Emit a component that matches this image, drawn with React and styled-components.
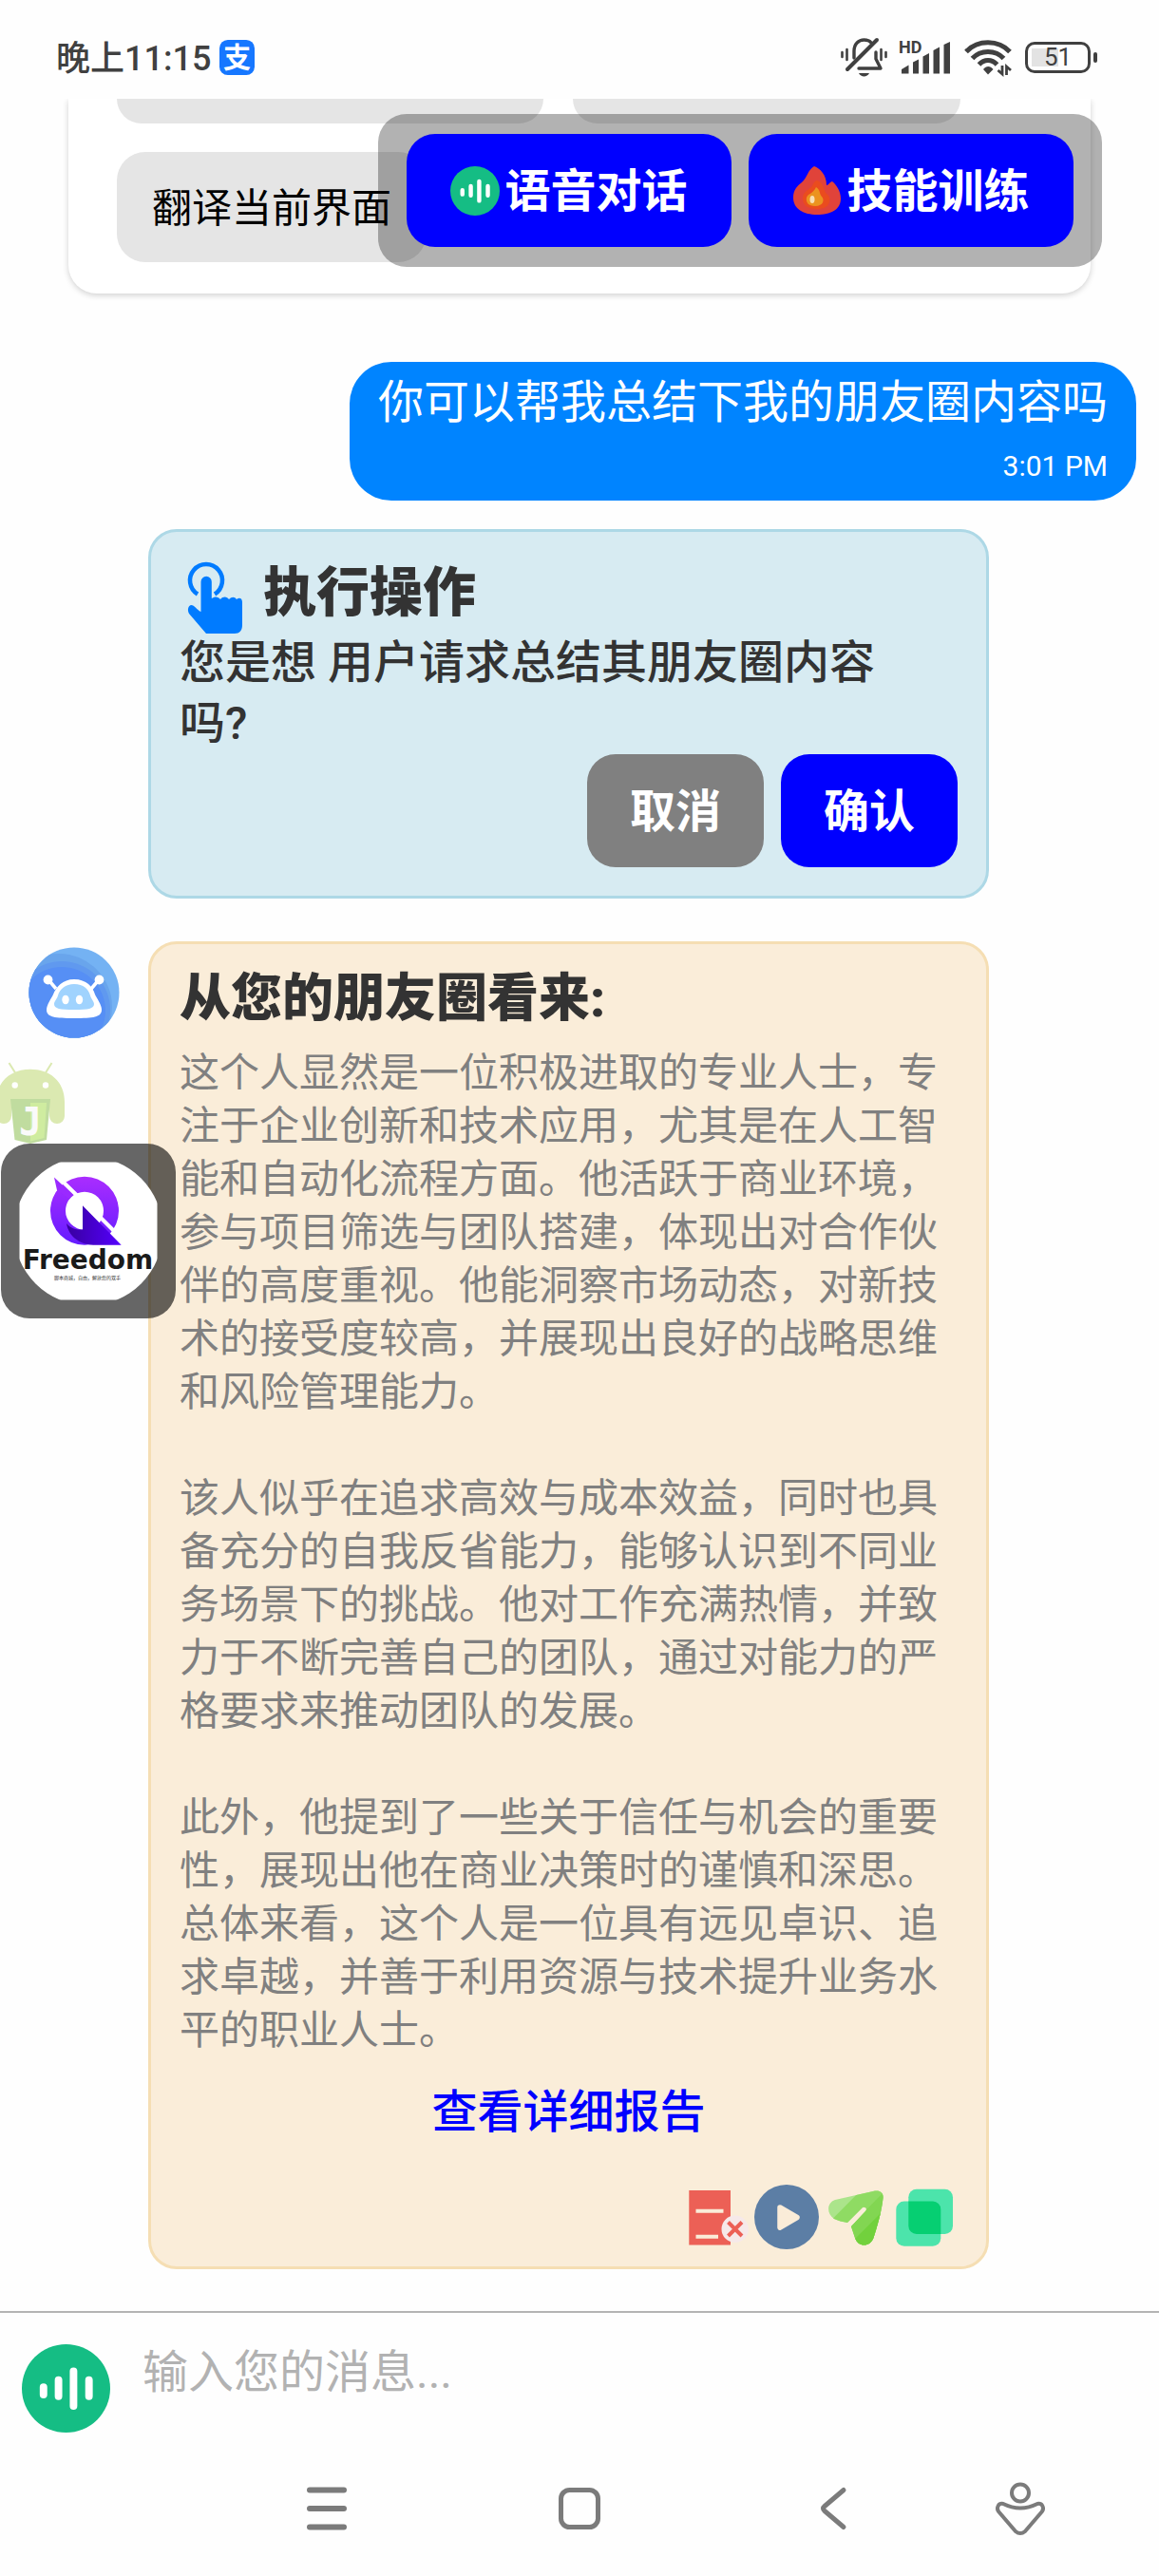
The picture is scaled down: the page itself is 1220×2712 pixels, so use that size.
import React from 'react';
import styled, { createGlobalStyle } from 'styled-components';

const GlobalStyle = createGlobalStyle`
    * {
        box-sizing: border-box;
    }
    body {
        margin: 0;
        background-color: #fefefe;
        font-family: Roboto, 'Noto Sans CJK SC', sans-serif;
    }
    h2, p {
        margin: 0;
    }
    button {
        margin: 0;
        padding: 0;
        border: none;
        background: none;
        font-family: inherit;
        cursor: pointer;
    }
    svg {
        display: block;
        flex: none;
        overflow: visible;
    }
`

const Page = styled.div`
    position: relative;
    display: flex;
    flex-direction: column;
    min-height: 100vh;
    overflow: hidden;
`

/* status bar */
const StatusBar = styled.header`
    display: flex;
    align-items: center;
    justify-content: space-between;
    height: 104px;
    padding: 16px 65px 0 59px;
    color: #404040;
`
const Clock = styled.div`
    display: flex;
    align-items: center;
    gap: 9px;
`
const ClockText = styled.span`
    padding-bottom: 4px;
    font-size: 36px;
    font-weight: 500;
`
const StatusIcons = styled.div`
    display: flex;
    align-items: center;
    gap: 13px;
`
const Battery = styled.div`
    display: flex;
    align-items: center;
    gap: 3px;
    &::after {
        content: '';
        width: 4px;
        height: 11px;
        border-radius: 2px;
        background-color: #404040;
    }
`
const BatteryBody = styled.div`
    width: 69px;
    height: 33px;
    border: 3px solid #404040;
    border-radius: 10px;
    background: linear-gradient(to right, #e3e3e3 50%, transparent 50%) 4px 4px / 55px 19px no-repeat;
    font-size: 26px;
    line-height: 27px;
    text-align: center;
`

/* chat */
const Chat = styled.main`
    flex: 1;
    display: flex;
    flex-direction: column;
`
const Panel = styled.section`
    display: flex;
    flex-direction: column;
    gap: 30px;
    margin: 0 72px;
    padding: 0 51px 33px;
    border-radius: 0 0 30px 30px;
    background-color: #fff;
    box-shadow: 0 2px 6px rgba(0, 0, 0, 0.18);
    clip-path: inset(0 -10px -10px -10px);
`
const ChipRow = styled.div`
    display: flex;
    gap: 31px;
`
const ChipEnd = styled.div`
    flex: 0 1 ${props => props.$basis};
    height: 26px;
    border-radius: 0 0 28px 28px;
    background-color: #e5e5e5;
`
const Chip = styled.button`
    height: 116px;
    padding: 0 37px 6px;
    border-radius: 30px;
    background-color: #e5e5e5;
    color: #000;
    font-size: 42px;
`
const UserBubble = styled.div`
    align-self: flex-end;
    margin: 72px 24px 0;
    padding: 11px 30px 16px;
    border-radius: 44px;
    background-color: #0084ff;
    color: #fff;
    font-size: 48px;
    line-height: 64px;
`
const Time = styled.div`
    margin-top: 15px;
    font-size: 30px;
    line-height: 40px;
    text-align: right;
`
const BotRow = styled.div`
    display: flex;
    margin-top: ${props => props.$top};
    padding-right: 179px;
`
const AvatarCell = styled.div`
    flex: none;
    width: 156px;
    padding: 6px 0 0 30px;
`
const Card = styled.article`
    flex: 1;
    min-width: 0;
    padding: ${props => props.$padding};
    border: 3px solid ${props => props.$line};
    border-radius: 30px;
    background-color: ${props => props.$fill};
    color: #333;
`
const CardHead = styled.div`
    display: flex;
    gap: 18px;
    height: 76px;
    padding-left: 6px;
`
const CardTitle = styled.h2`
    font-size: ${props => props.$size};
    font-weight: 900;
    line-height: 68px;
`
const Question = styled.p`
    padding-right: 30px;
    font-size: 48px;
    font-weight: 500;
    line-height: 64px;
`
const Report = styled.p`
    margin-top: 16px;
    color: #808080;
    font-size: 42px;
    line-height: 56px;
    white-space: pre-line;
`
const ReportLink = styled.a`
    display: block;
    margin-top: 26px;
    color: #0000ff;
    font-size: 48px;
    font-weight: 500;
    line-height: 64px;
    text-align: center;
    text-decoration: none;
`
const ButtonRow = styled.div`
    display: flex;
    justify-content: flex-end;
    gap: 18px;
`
const ActionRow = styled.div`
    display: flex;
    justify-content: flex-end;
    gap: 5px;
    margin-top: 44px;
`
const Button = styled.button`
    display: flex;
    align-items: center;
    justify-content: center;
    gap: 5px;
    min-width: ${props => props.$wide ? '342px' : '186px'};
    height: 119px;
    border-radius: 30px;
    background-color: ${props => props.$gray ? '#808080' : '#0000ff'};
    color: #fff;
    font-size: 48px;
    font-weight: 700;
    white-space: nowrap;
`
const ButtonLabel = styled.span`
    padding-bottom: 8px;
`

/* floating parts */
const Toolbox = styled.div`
    position: absolute;
    top: 120px;
    right: 60px;
    display: flex;
    gap: 18px;
    padding: 21px 30px;
    border-radius: 30px;
    background-color: rgba(0, 0, 0, 0.3);
`
const RobotFloat = styled.div`
    position: absolute;
    top: 1110px;
    left: 0;
`
const LogoFloat = styled.button`
    position: absolute;
    top: 1204px;
    left: 1px;
    border-radius: 30px;
    background-color: rgba(0, 0, 0, 0.6);
`

/* input + system keys */
const Composer = styled.form`
    display: flex;
    align-items: flex-start;
    gap: 34px;
    height: 137px;
    margin-top: 44px;
    padding: 33px 23px 0;
    border-top: 2px solid #b4b4b4;
`
const MessageInput = styled.input`
    flex: 1;
    min-width: 0;
    height: 58px;
    margin: 0;
    padding: 0;
    border: none;
    outline: none;
    background: none;
    font-family: inherit;
    font-size: 48px;
    &::placeholder {
        color: #b2b2b2;
        opacity: 1;
    }
`
const NavBar = styled.nav`
    display: grid;
    grid-template-columns: 211fr 266fr 266fr 268fr 126fr 83fr;
    height: 142px;
    & > button {
        display: flex;
        align-items: center;
        justify-content: center;
    }
    & > button:first-child {
        grid-column: 2;
    }
`

const reportText = `这个人显然是一位积极进取的专业人士，专注于企业创新和技术应用，尤其是在人工智能和自动化流程方面。他活跃于商业环境，参与项目筛选与团队搭建，体现出对合作伙伴的高度重视。他能洞察市场动态，对新技术的接受度较高，并展现出良好的战略思维和风险管理能力。

该人似乎在追求高效与成本效益，同时也具备充分的自我反省能力，能够认识到不同业务场景下的挑战。他对工作充满热情，并致力于不断完善自己的团队，通过对能力的严格要求来推动团队的发展。

此外，他提到了一些关于信任与机会的重要性，展现出他在商业决策时的谨慎和深思。总体来看，这个人是一位具有远见卓识、追求卓越，并善于利用资源与技术提升业务水平的职业人士。`

const PayIcon = () => (
    <svg width="37" height="37" viewBox="0 0 38 38">
        <rect width="38" height="38" rx="9" fill="#1677ff" />
        <text x="19" y="30" fontSize="30" fontWeight="700" textAnchor="middle" fill="#fff">支</text>
    </svg>
)

const MuteIcon = () => (
    <svg width="49" height="43" viewBox="14 9 49 43" fill="none" stroke="#404040" strokeWidth="3.4" strokeLinecap="round">
        <path d="M28 31V24C28 16 33 12 38.500 12C42 12 44.500 13 46 15" />
        <path d="M51 25V32L56 42H33" strokeLinejoin="round" />
        <path d="M52 12L21 43" strokeWidth="4" />
        <path d="M33 47H44C42 51.500 35 51.500 33 47Z" fill="#404040" stroke="none" />
        <path d="M15.500 25V30M20.500 22V33M56.500 22V33M61.500 25V30" strokeWidth="2.600" />
    </svg>
)

const SignalIcon = () => (
    <svg width="54" height="38" viewBox="76 10 54 38" fill="#404040">
        <text x="75" y="25" fontSize="18" fontWeight="700">HD</text>
        <path d="M78 42L85.500 37.500V46.500H78Z" />
        <path d="M90 34.500L96 31.500V46.500H90Z" />
        <path d="M100.500 28.500L107 25V46.500H100.500Z" />
        <path d="M111.500 22L118 18.500V46.500H111.500Z" />
        <path d="M122.500 16L129 13V46.500H122.500Z" />
    </svg>
)

const WifiIcon = () => (
    <svg width="52" height="40" viewBox="142 10 52 40" fill="none" stroke="#404040" strokeWidth="5">
        <path d="M145 24.500C157 11.500 179 11.500 191 24.500" />
        <path d="M151.500 31.500C160 22 176 22 184.500 31.500" />
        <path d="M158.500 38C164 32 172 32 177.500 38" />
        <path d="M163 43C166 39 170.500 39 173.500 43L168 48.500Z" fill="#404040" stroke="none" />
        <path d="M183 39V48L178.500 44M187.500 49V40L192 44" strokeWidth="2.800" />
    </svg>
)

const VoiceIcon = ({ size }) => (
    <svg width={size} height={size} viewBox="0 0 100 100">
        <circle cx="50" cy="50" r="50" fill="#15bd84" />
        <path d="M24.500 48.500V57M41.500 40.500V59M58.500 30.500V70M76 40.500V59" fill="none" stroke="#fff" strokeWidth="8.500" strokeLinecap="round" />
    </svg>
)

const FireIcon = () => (
    <svg width="52" height="53" viewBox="0 0 52 53">
        <path d="M23 1C29 3 36 10 36 21C38 21 40 17 42 17C46 20 51 27 51 35C51 47 40 52 26 52C12 52 1 46 1 34C1 26 5 22 10 18C16 13 16 5 23 1Z" fill="#e0433a" />
        <path d="M26 16C34 19 33 27 36 30C39 32 40 35 39 39C37 45 32 46 25 46C17 46 11 42 11 35C11 28 17 26 20 23C22 21 22 17 26 16Z" fill="#ea4c1e" />
        <path d="M25 23C30 26 28 30 31 33C34 36 33 43 24 43C17 43 14 39 15 34C16 30 22 30 25 23Z" fill="#eb931f" />
        <ellipse cx="21" cy="36" rx="2.500" ry="4" fill="#f8dfb4" />
    </svg>
)

const TapIcon = () => (
    <svg width="64" height="78" viewBox="0 0 64 78" fill="#007bff">
        <path d="M13 35.500A17 17 0 1 1 31 35.500" fill="none" stroke="#007bff" strokeWidth="4.500" />
        <path d="M16.500 22.500A5.600 5.600 0 0 1 27.800 22.500V40C31 37.500 35 38 37 41C40 37.500 44 38 46 41C49 38 52 38 54 41C57 38.500 60 40 60 44V68C60 74 57 77 52 77H22L4 56C2 52 3 48 6 47C10 47 12 52 16.500 54Z" />
    </svg>
)

const BotAvatar = () => (
    <svg width="96" height="96" viewBox="30 27 96 96">
        <clipPath id="avatarClip"><circle cx="78" cy="75" r="47.500" /></clipPath>
        <g clipPath="url(#avatarClip)">
            <rect x="30" y="27" width="96" height="96" fill="#74b2f3" />
            <circle cx="62" cy="90" r="56" fill="#69a5ec" />
            <circle cx="65" cy="93" r="51" fill="#6099ef" />
            <circle cx="65" cy="94" r="46" fill="#568ff5" />
        </g>
        <path d="M50.500 61L59 71M104.500 61L96 71" stroke="#fff" strokeWidth="3.500" />
        <circle cx="50.500" cy="61.500" r="4.900" fill="#fff" />
        <circle cx="104.500" cy="61.500" r="4.900" fill="#fff" />
        <path d="M78 61C91 61 98 69 100 77C102 81 107 88 107 93C107 101 98 102 78 102C58 102 49 101 49 93C49 88 54 81 56 77C59 69 66 61 78 61Z" fill="#fff" />
        <path d="M78 66C88 66 93 71 95 78C96 82 99 84 99 87C99 92 93 93 78 93C63 93 57 92 57 87C57 84 60 82 61 78C63 71 69 66 78 66Z" fill="#a0d3fe" />
        <ellipse cx="69" cy="82.500" rx="3.700" ry="4.800" fill="#fff" />
        <ellipse cx="83.500" cy="82.500" rx="3.700" ry="4.800" fill="#fff" />
    </svg>
)

const RobotIcon = () => (
    <svg width="70" height="94" viewBox="0 0 70 94">
        <path d="M9.500 9L17 21M54.500 9L47 21" stroke="#dbe9b1" strokeWidth="2" />
        <path d="M-4 50C-4 28 12 15.700 32 15.700S68 28 68 50V65A8 8 0 0 1 52 65V47H12V65A8 8 0 0 1 -4 65Z" fill="#dbe9b1" />
        <circle cx="15.700" cy="32.500" r="3.200" fill="#fff" />
        <circle cx="48" cy="32.500" r="3.200" fill="#fff" />
        <path d="M11 47H53L49 90L32 94L15.500 90Z" fill="#c0dc9f" />
        <path d="M32 51H49L46.500 88L32 91.500Z" fill="#cfeca0" />
        <text x="32" y="85" fontFamily="DejaVu Sans Mono, monospace" fontSize="40" fontWeight="700" textAnchor="middle" fill="#fafafa">J</text>
    </svg>
)

const FreedomLogo = () => (
    <svg width="184" height="184" viewBox="1 94 184 184">
        <defs>
            <clipPath id="logoClip"><circle cx="93" cy="186" r="78.500" /></clipPath>
            <linearGradient id="ring" x1="0" y1="0" x2="0" y2="1">
                <stop offset="0" stopColor="#aa2dff" />
                <stop offset="1" stopColor="#641cff" />
            </linearGradient>
            <linearGradient id="wedge" x1="0" y1="0" x2="1" y2="0">
                <stop offset="0" stopColor="#38009f" />
                <stop offset="1" stopColor="#5500ff" />
            </linearGradient>
        </defs>
        <g clipPath="url(#logoClip)">
            <rect x="20.500" y="113.500" width="145" height="145" rx="2" fill="#fff" />
            <path d="M89 128.700A36 36 0 1 1 89 200.700A36 36 0 1 1 89 128.700ZM89 144.700A20 20 0 1 0 89 184.700A20 20 0 1 0 89 144.700Z" fill="url(#ring)" />
            <path d="M57 129.500L77 148L73 152L60 143Z" fill="#9a2aff" />
            <path d="M62 130L82 149.500M104 170L124 190" stroke="#fff" strokeWidth="4" />
            <path d="M87 159.300L127.700 200.700H98C83 200 72 191 70 178C74 183 80 185 87 184.500Z" fill="url(#wedge)" />
            <text x="92.500" y="225.500" fontFamily="DejaVu Sans, sans-serif" fontSize="28" fontWeight="700" textAnchor="middle" fill="#1a1a1a">Freedom</text>
            <text x="92" y="237" fontSize="5" textAnchor="middle" fill="#333">脚本商城，自由，解放您的双手</text>
        </g>
    </svg>
)

const DeleteIcon = () => (
    <svg width="68" height="68" viewBox="11 10 68 68">
        <path d="M15.300 16H59V73.500H15.300Z" fill="#ec6056" />
        <path d="M22.500 37.800H51.500M22.500 64.800H46" stroke="#faecd8" strokeWidth="4" />
        <circle cx="63.700" cy="56.700" r="14.200" fill="#f6e9e9" />
        <path d="M56.500 49.500L71 64M71 49.500L56.500 64" stroke="#ec6056" strokeWidth="4" />
    </svg>
)

const PlayIcon = () => (
    <svg width="68" height="68" viewBox="83.500 10 68 68">
        <circle cx="117.500" cy="44" r="34" fill="#5c7ea5" />
        <path d="M110.500 34L128.500 44.500L110.500 55Z" fill="#faecd8" stroke="#faecd8" strokeWidth="5.500" strokeLinejoin="round" />
    </svg>
)

const SendIcon = () => (
    <svg width="68" height="68" viewBox="156 10 68 68">
        <clipPath id="sendClip">
            <path d="M168 26L208 17C215 15.500 219 18 218.500 24C217 39 212 55 208.500 66C205 76 192 76 189 66L185 54L200.500 37.500C202 34.500 199.500 33 197 34L181 50C176 49 171 48 167 46C159 41 159 29 168 26Z" />
        </clipPath>
        <g clipPath="url(#sendClip)">
            <rect x="156" y="10" width="68" height="68" fill="#abe48b" />
            <path d="M201 10H224V78H134Z" fill="#8fdb63" />
            <path d="M227 10V78H160Z" fill="#82d652" />
            <path d="M232 24V78H178Z" fill="#72d13d" />
        </g>
    </svg>
)

const CopyIcon = () => (
    <svg width="68" height="68" viewBox="229 10 68 68">
        <rect x="245.300" y="14.700" width="46.700" height="47.300" rx="8.500" fill="#4ce4ab" />
        <rect x="232.300" y="27.500" width="47" height="47.300" rx="8.500" fill="#4ce4ab" />
        <path d="M245.300 27.500H271A8.500 8.500 0 0 1 279.300 36V62H253.800A8.500 8.500 0 0 1 245.300 53.500Z" fill="#06cf72" />
    </svg>
)

const App = () => {
    return (
        <>
            <GlobalStyle />
            <Page>
                <StatusBar>
                    <Clock>
                        <ClockText>晚上11:15</ClockText>
                        <PayIcon />
                    </Clock>
                    <StatusIcons>
                        <MuteIcon />
                        <SignalIcon />
                        <WifiIcon />
                        <Battery>
                            <BatteryBody>51</BatteryBody>
                        </Battery>
                    </StatusIcons>
                </StatusBar>

                <Chat>
                    <Panel>
                        <ChipRow>
                            <ChipEnd $basis="449px" />
                            <ChipEnd $basis="408px" />
                        </ChipRow>
                        <ChipRow>
                            <Chip type="button">翻译当前界面</Chip>
                        </ChipRow>
                    </Panel>

                    <UserBubble>
                        <p>你可以帮我总结下我的朋友圈内容吗</p>
                        <Time>3:01 PM</Time>
                    </UserBubble>

                    <BotRow $top="30px">
                        <AvatarCell />
                        <Card $fill="#d7ebf2" $line="#add8e6" $padding="30px">
                            <CardHead>
                                <TapIcon />
                                <CardTitle $size="56px">执行操作</CardTitle>
                            </CardHead>
                            <Question>您是想 用户请求总结其朋友圈内容吗?</Question>
                            <ButtonRow>
                                <Button type="button" $gray>
                                    <ButtonLabel>取消</ButtonLabel>
                                </Button>
                                <Button type="button">
                                    <ButtonLabel>确认</ButtonLabel>
                                </Button>
                            </ButtonRow>
                        </Card>
                    </BotRow>

                    <BotRow $top="45px">
                        <AvatarCell>
                            <BotAvatar />
                        </AvatarCell>
                        <Card $fill="#faedd9" $line="#f5deb3" $padding="24px 30px 18px">
                            <CardTitle $size="54px">从您的朋友圈看来:</CardTitle>
                            <Report>{reportText}</Report>
                            <ReportLink href="#report">查看详细报告</ReportLink>
                            <ActionRow>
                                <button type="button"><DeleteIcon /></button>
                                <button type="button"><PlayIcon /></button>
                                <button type="button"><SendIcon /></button>
                                <button type="button"><CopyIcon /></button>
                            </ActionRow>
                        </Card>
                    </BotRow>
                </Chat>

                <Composer>
                    <button type="button"><VoiceIcon size={93} /></button>
                    <MessageInput type="text" placeholder="输入您的消息..." />
                </Composer>

                <NavBar>
                    <button type="button">
                        <svg width="42" height="46" viewBox="0 0 42 46" stroke="#7b7b7b" strokeWidth="6" strokeLinecap="round">
                            <path d="M3 3.500H39M3 23H39M3 42.500H39" />
                        </svg>
                    </button>
                    <button type="button">
                        <svg width="46" height="46" viewBox="0 0 46 46" fill="none" stroke="#7b7b7b" strokeWidth="5">
                            <rect x="3.500" y="3.500" width="39" height="39" rx="9" />
                        </svg>
                    </button>
                    <button type="button">
                        <svg width="28" height="44" viewBox="0 0 28 44" fill="none" stroke="#7b7b7b" strokeWidth="5" strokeLinecap="round">
                            <path d="M25 2.500L5 19.500Q2 22 5 24.500L25 41.500" />
                        </svg>
                    </button>
                    <button type="button">
                        <svg width="52" height="56" viewBox="0 0 52 56" fill="none" stroke="#7b7b7b" strokeWidth="4" strokeLinejoin="round">
                            <circle cx="26" cy="11.500" r="9" />
                            <path d="M8 23Q26 32 44 23C49 22 51.500 27 49 31L31 52Q26 56 21 52L3 31C0.500 27 3 22 8 23Z" />
                        </svg>
                    </button>
                </NavBar>

                <Toolbox>
                    <Button type="button" $wide>
                        <VoiceIcon size={52} />
                        <ButtonLabel>语音对话</ButtonLabel>
                    </Button>
                    <Button type="button" $wide>
                        <FireIcon />
                        <ButtonLabel>技能训练</ButtonLabel>
                    </Button>
                </Toolbox>
                <RobotFloat>
                    <RobotIcon />
                </RobotFloat>
                <LogoFloat type="button">
                    <FreedomLogo />
                </LogoFloat>
            </Page>
        </>
    );
};

export default App;
